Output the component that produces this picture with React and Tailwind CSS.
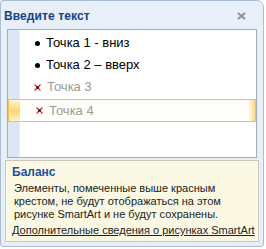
import React from "react";

const items = [
  { text: "Точка 1 - вниз", kind: "dot" },
  { text: "Точка 2 – вверх", kind: "dot" },
  { text: "Точка 3", kind: "cross" },
  { text: "Точка 4", kind: "cross", selected: true },
];

function Cross() {
  return (
    <svg width="7" height="7" viewBox="0 0 7 7" className="shrink-0">
      <path d="M0.5 0.5 L6.5 6.5 M6.5 0.5 L0.5 6.5" stroke="#e0303a" strokeWidth="1.4" />
      <rect x="2.3" y="2.3" width="2.4" height="2.4" fill="#3a0a0a" />
    </svg>
  );
}

export default function App() {
  return (
    <div className="w-[266px] h-[249px] bg-white" style={{ fontFamily: "'Liberation Sans', Arial, sans-serif" }}>
      <div className="w-[264px] h-[247px] border border-[#a9bdd4] rounded-tl-[3px] rounded-tr-[7px] rounded-b-[3px] bg-[#e7eff9] flex flex-col">
        {/* title */}
        <div className="h-[28px] flex items-center justify-between pl-[3px] pr-[17px] shrink-0">
          <span className="text-[12px] font-bold text-[#15428b] tracking-[0.1px] mt-[1px]">Введите текст</span>
          <svg width="9" height="8" viewBox="0 0 9 8" className="mt-[2px]">
            <path d="M1 1 L8 7 M8 1 L1 7" stroke="#8a8f96" strokeWidth="1.8" />
          </svg>
        </div>

        {/* text pane */}
        <div className="mx-[6px] h-[129px] border border-[#a8acb2] bg-white flex shrink-0">
          <div className="flex-1 flex flex-col pt-[2px] relative">
            <div className="absolute left-0 top-0 bottom-0 w-[12px] bg-[#dde7f4] border-r border-[#e8eef6]" />
            {items.map((it) =>
              it.selected ? (
                <div
                  key={it.text}
                  className="relative h-[23px] mt-[1px] border border-[#f7bd57] flex items-center"
                  style={{ background: "linear-gradient(to right, #fffefa 97%, #fcd98c 100%)" }}
                >
                  <div
                    className="w-[11px] self-stretch"
                    style={{ background: "linear-gradient(to bottom, #fff4cf 0%, #fcd77a 50%, #fff0c4 100%)" }}
                  />
                  <div className="w-[16px]" />
                  <Cross />
                  <span className="ml-[6px] text-[13px] text-[#9a9a9a]">{it.text}</span>
                </div>
              ) : (
                <div key={it.text} className="relative h-[22px] flex items-center pl-[26px]">
                  {it.kind === "dot" ? (
                    <span className="w-[5px] h-[5px] rounded-full bg-black shrink-0 ml-[1px]" />
                  ) : (
                    <Cross />
                  )}
                  <span className={`ml-[6px] text-[13px] ${it.kind === "dot" ? "text-black" : "text-[#9a9a9a]"}`}>{it.text}</span>
                </div>
              )
            )}
          </div>
        </div>

        {/* info pane */}
        <div className="mx-[4px] mt-[2px] h-[82px] border border-[#c9c7b8] bg-[#fbf9e3] pl-[6px] pt-[4px] text-[11px] leading-[13px]">
          <div className="font-bold text-[#22509f] text-[12px] leading-[15px]">Баланс</div>
          <div className="text-[#222] pl-[2px] mt-[2px]">
            Элементы, помеченные выше красным
            <br />
            крестом, не будут отображаться на этом
            <br />
            рисунке SmartArt и не будут сохранены.
          </div>
          <div className="text-[#222] underline mt-[3px]">Дополнительные сведения о рисунках SmartArt</div>
        </div>
      </div>
    </div>
  );
}
